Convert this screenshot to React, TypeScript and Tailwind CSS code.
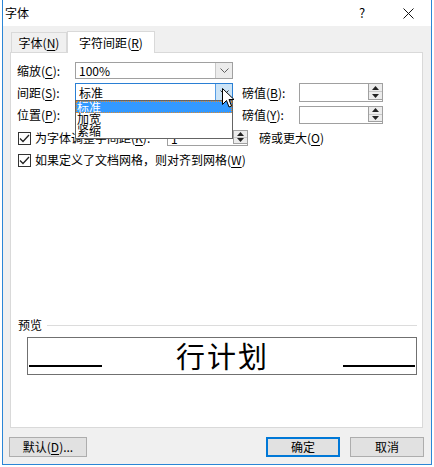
import React from "react";

const F = { fontFamily: '"Noto Sans CJK SC", "Noto Sans", sans-serif' };

function Hk({ c }: { c: string }) {
  return (
    <>
      (<span className="underline underline-offset-2">{c}</span>)
    </>
  );
}

function Chevron({ color = "#606060" }: { color?: string }) {
  return (
    <svg width="9" height="6" viewBox="0 0 9 6">
      <path d="M0.5 0.5 L4.5 4.5 L8.5 0.5" fill="none" stroke={color} strokeWidth="1" />
    </svg>
  );
}

function Spinner() {
  return (
    <div className="w-[15px] h-full flex flex-col border border-[#a0a0a0] bg-[#ececec] -my-px -mr-px">
      <div className="flex-1 flex items-center justify-center border-b border-[#c8c8c8]">
        <svg width="7" height="4" viewBox="0 0 7 4">
          <path d="M0 4 L3.5 0 L7 4 Z" fill="#222" />
        </svg>
      </div>
      <div className="flex-1 flex items-center justify-center">
        <svg width="7" height="4" viewBox="0 0 7 4">
          <path d="M0 0 L3.5 4 L7 0 Z" fill="#222" />
        </svg>
      </div>
    </div>
  );
}

function SpinInput({ w, text }: { w: string; text?: string }) {
  return (
    <div className={`${w} h-full border border-[#a0a0a0] bg-white flex justify-between`}>
      <span className="pl-[3px] leading-[16px]">{text}</span>
      <Spinner />
    </div>
  );
}

function Check() {
  return (
    <div className="w-[13px] h-[13px] border border-[#333] bg-white flex items-center justify-center shrink-0">
      <svg width="11" height="9" viewBox="0 0 11 9">
        <path d="M1 4.5 L4 7.5 L10 1" fill="none" stroke="#222" strokeWidth="1.3" />
      </svg>
    </div>
  );
}

export default function App() {
  return (
    <div className="w-[434px] h-[467px] bg-white relative overflow-hidden text-[12px] text-black" style={F}>
      <div className="ml-[2px] w-[430px] h-[465px] border-x border-b border-[#2b86d6] bg-[#f0f0f0] flex flex-col">
        {/* title bar */}
        <div className="h-[26px] bg-white flex items-center shrink-0">
          <span className="pl-[2px] flex-1 text-[12px]">字体</span>
          <div className="w-[46px] h-full flex items-center justify-center text-[13px]">?</div>
          <div className="w-[46px] h-full flex items-center justify-center">
            <svg width="11" height="11" viewBox="0 0 11 11">
              <path d="M0.5 0.5 L10.5 10.5 M10.5 0.5 L0.5 10.5" stroke="#111" strokeWidth="1" />
            </svg>
          </div>
        </div>

        {/* tabs */}
        <div className="h-[26px] flex items-end pl-[8px] shrink-0 relative z-10">
          <div className="w-[56px] h-[20px] border border-b-0 border-[#d9d9d9] bg-[#f0f0f0] flex items-center justify-center mb-0">
            字体<Hk c="N" />
          </div>
          <div className="w-[88px] h-[22px] -mb-px border border-b-0 border-[#d9d9d9] bg-white flex items-center justify-center">
            字符间距<Hk c="R" />
          </div>
        </div>

        {/* panel */}
        <div className="ml-[7px] w-[413px] h-[376px] border border-[#d9d9d9] bg-white relative flex flex-col pl-[6px] shrink-0">
          {/* row 1 */}
          <div className="mt-[9px] h-[17px] flex items-center">
            <span className="w-[58px]">缩放<Hk c="C" />:</span>
            <div className="w-[158px] h-full border border-[#a0a0a0] flex">
              <span className="flex-1 pl-[3px] leading-[15px]">100%</span>
              <div className="w-[17px] h-full border-l border-[#c8c8c8] bg-[#ececec] flex items-center justify-center">
                <Chevron />
              </div>
            </div>
          </div>
          {/* row 2 */}
          <div className="mt-[4px] h-[19px] flex items-center">
            <span className="w-[58px]">间距<Hk c="S" />:</span>
            <div className="w-[158px] h-full border border-[#2a7fd4] flex">
              <span className="flex-1 pl-[3px] leading-[17px]">标准</span>
              <div className="w-[17px] h-full border-l border-[#569de5] bg-[#cce4f7] flex items-center justify-center">
                <Chevron color="#333" />
              </div>
            </div>
            <span className="ml-[9px] w-[57px]">磅值<Hk c="B" />:</span>
            <SpinInput w="w-[84px]" />
          </div>
          {/* row 3 */}
          <div className="mt-[4px] h-[18px] flex items-center">
            <span className="w-[58px]">位置<Hk c="P" />:</span>
            <div className="w-[158px] h-full border border-[#a0a0a0]" />
            <span className="ml-[9px] w-[57px]">磅值<Hk c="Y" />:</span>
            <SpinInput w="w-[84px]" />
          </div>
          {/* row 4 */}
          <div className="mt-[6px] h-[16px] flex items-center pl-[1px]">
            <Check />
            <span className="ml-[4px] w-[132px]">为字体调整字间距<Hk c="K" />:</span>
            <SpinInput w="w-[81px]" text="1" />
            <span className="ml-[11px]">磅或更大<Hk c="O" /></span>
          </div>
          {/* row 5 */}
          <div className="mt-[6px] h-[16px] flex items-center pl-[1px]">
            <Check />
            <span className="ml-[4px]">如果定义了文档网格，则对齐到网格<Hk c="W" /></span>
          </div>

          {/* preview */}
          <div className="mt-[150px] h-[14px] flex items-center pl-[1px] pr-[5px]">
            <span>预览</span>
            <div className="ml-[5px] flex-1 h-px bg-[#dcdcdc]" />
          </div>
          <div className="mt-[5px] ml-[10px] w-[390px] h-[38px] border border-[#707070] flex items-end justify-between px-[1px] pb-[7px]">
            <div className="w-[73px] h-[2px] bg-black" />
            <span className="text-[29px] leading-[30px] tracking-[2px] mb-[-3px]" style={F}>行计划</span>
            <div className="w-[72px] h-[2px] bg-black" />
          </div>

          {/* dropdown list */}
          <div className="absolute left-[64px] top-[47px] w-[158px] h-[39px] border border-[#646464] bg-white z-20 flex flex-col text-[12px]">
            <div className="h-[12px] bg-[#3399ff] text-white leading-[12px] pl-[1px] outline-1 outline-dotted outline-[#e08a2c] -outline-offset-1">标准</div>
            <div className="h-[12px] leading-[12px] pl-[1px]">加宽</div>
            <div className="h-[12px] leading-[12px] pl-[1px]">紧缩</div>
          </div>
        </div>

        {/* buttons */}
        <div className="mt-[9px] h-[20px] flex items-center pl-[6px] pr-[7px] shrink-0">
          <div className="w-[78px] h-full border border-[#adadad] bg-[#e1e1e1] flex items-center justify-center">
            默认<Hk c="D" />...
          </div>
          <div className="flex-1" />
          <div className="w-[74px] h-full border-2 border-[#0078d7] bg-[#e1e1e1] flex items-center justify-center">确定</div>
          <div className="ml-[10px] w-[74px] h-full border border-[#adadad] bg-[#e1e1e1] flex items-center justify-center">取消</div>
        </div>
      </div>

      {/* mouse cursor */}
      <svg className="absolute left-[222px] top-[88px] z-30" width="13" height="21" viewBox="0 0 13 21">
        <path d="M0.5 0.5 L0.5 16.5 L4.5 12.5 L7 19 L9.5 18 L7 11.5 L12 11.5 Z" fill="#fff" stroke="#000" strokeWidth="1" strokeLinejoin="miter" />
      </svg>
    </div>
  );
}
